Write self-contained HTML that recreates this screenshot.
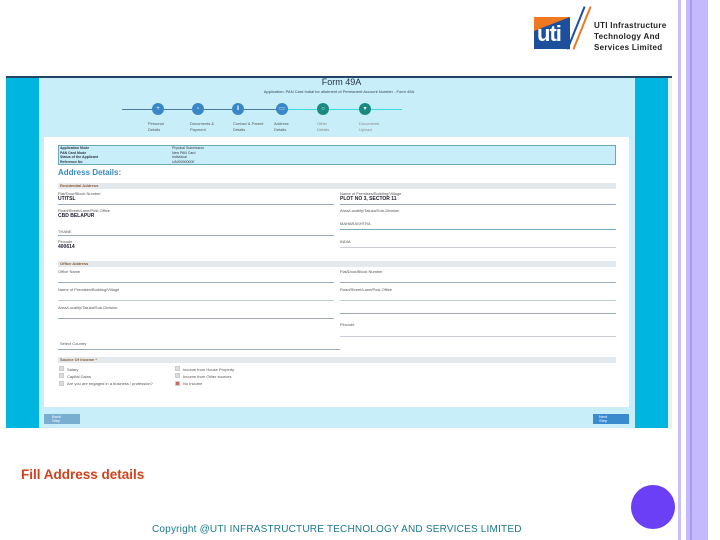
<!DOCTYPE html>
<html><head><style>
*{margin:0;padding:0;box-sizing:border-box}
body{width:720px;height:540px;background:#fff;position:relative;overflow:hidden;font-family:"Liberation Sans",sans-serif}
.a{position:absolute}
.t{position:absolute;font-size:4px;line-height:4px;color:#555;white-space:nowrap}
.v{position:absolute;font-size:5px;line-height:5px;font-weight:bold;color:#223;white-space:nowrap}
.ul{position:absolute;height:1px;background:#9ab}
.bar{position:absolute;left:58px;width:558px;height:6px;background:#e4e9ee}
.bar span{position:absolute;left:2px;top:1px;font-size:4px;line-height:4px;color:#8a5a2a;font-weight:bold}
.c{position:absolute;width:12px;height:12px;border-radius:50%;top:103px;color:#fff;font-size:6px;text-align:center;line-height:12px}
.cb{position:absolute;width:5px;height:5px;background:#ddd;border:1px solid #ccc}
</style></head><body>
<div class="a" style="left:678px;top:0;width:3px;height:540px;background:#c9c0fb"></div>
<div class="a" style="left:686px;top:0;width:22px;height:540px;background:#c4b8ff"></div>
<div class="a" style="left:690px;top:0;width:2px;height:540px;background:#a898ef"></div>
<div class="a" style="left:631px;top:485px;width:44px;height:44px;border-radius:50%;background:#6b3ff5"></div>
<div class="a" style="left:534px;top:17px;width:36px;height:32px;background:#1d4f9c"></div>
<div class="a" style="left:534px;top:17px;width:0;height:0;border-top:14px solid #f07820;border-right:36px solid transparent"></div>
<div class="a" style="left:537px;top:21px;font:bold 22px 'Liberation Sans';color:#fff;letter-spacing:-1px">uti</div>
<div class="a" style="left:575px;top:5px;width:2px;height:46px;background:#1d4f9c;transform:rotate(22deg)"></div>
<div class="a" style="left:581px;top:5px;width:2px;height:46px;background:#f07820;transform:rotate(22deg)"></div>
<div class="a" style="left:594px;top:20px;font:bold 8px 'Liberation Sans';color:#222;line-height:11px;letter-spacing:0.3px">UTI Infrastructure<br>Technology And<br>Services Limited</div>
<div class="a" style="left:6px;top:77px;width:666px;height:351px;background:#00b6e0"></div>
<div class="a" style="left:6px;top:76px;width:666px;height:2px;background:#246"></div>
<div class="a" style="left:668px;top:78px;width:4px;height:350px;background:#eee"></div>
<div class="a" style="left:39px;top:78px;width:596px;height:350px;background:#c8eefa"></div>
<div class="a" style="left:0;top:77px;width:678px;text-align:center;font-size:9px;color:#234;">&nbsp;&nbsp;Form 49A</div>
<div class="a" style="left:0;top:89px;width:678px;text-align:center;font-size:4px;color:#345">Application: PAN Card Indial for allotment of Permanent Account Number - Form 49A</div>
<div class="a" style="left:122px;top:109px;width:160px;height:1px;background:#4a7a99"></div>
<div class="a" style="left:282px;top:109px;width:120px;height:1px;background:#3dd"></div>
<div class="c" style="left:152px;background:#3a87c8">+</div>
<div class="c" style="left:192px;background:#3a87c8">▫</div>
<div class="c" style="left:232px;background:#3a87c8">‖</div>
<div class="c" style="left:276px;background:#3a87c8">▭</div>
<div class="c" style="left:317px;background:#1a8a80">○</div>
<div class="c" style="left:359px;background:#1a8a80">▾</div>
<div class="t" style="left:148px;top:121px;line-height:6px">Personal<br>Details</div>
<div class="t" style="left:190px;top:121px;line-height:6px">Documents &amp;<br>Payment</div>
<div class="t" style="left:233px;top:121px;line-height:6px">Contact &amp; Parent<br>Details</div>
<div class="t" style="left:274px;top:121px;line-height:6px">Address<br>Details</div>
<div class="t" style="left:317px;top:121px;line-height:6px;color:#888">Other<br>Details</div>
<div class="t" style="left:359px;top:121px;line-height:6px;color:#888">Documents<br>Upload</div>
<div class="a" style="left:44px;top:137px;width:585px;height:270px;background:#fff"></div>
<div class="a" style="left:58px;top:145px;width:558px;height:20px;background:#c8eefa;border:1px solid #6ab"></div>
<div class="t" style="left:60px;top:146px;line-height:4.5px;font-size:3.5px;font-weight:bold;color:#334">Application Mode<br>PAN Card Mode<br>Status of the Applicant<br>Reference No</div>
<div class="t" style="left:172px;top:146px;line-height:4.5px;font-size:3.5px;color:#334">Physical Submission<br>New PAN Card<br>Individual<br>UA000000000</div>
<div class="a" style="left:58px;top:168px;font-size:8px;font-weight:bold;color:#3a8abf">Address Details:</div>
<div class="bar" style="top:183px"><span>Residential Address</span></div>
<div class="t" style="left:58px;top:192px">Flat/Door/Block Number</div><div class="v" style="left:58px;top:197px">UTITSL</div><div class="ul" style="left:58px;top:204px;width:276px"></div>
<div class="t" style="left:340px;top:192px">Name of Premises/Building/Village</div><div class="v" style="left:340px;top:197px">PLOT NO 3, SECTOR 11</div><div class="ul" style="left:340px;top:204px;width:276px"></div>
<div class="t" style="left:58px;top:209px">Road/Street/Lane/Post Office</div><div class="v" style="left:58px;top:214px">CBD BELAPUR</div>
<div class="t" style="left:340px;top:209px">Area/Locality/Taluka/Sub-Division</div>
<div class="t" style="left:340px;top:222px">MAHARASHTRA</div><div class="ul" style="left:340px;top:229px;width:276px;background:#7ab"></div>
<div class="t" style="left:58px;top:230px">THANE</div><div class="ul" style="left:58px;top:235px;width:276px"></div>
<div class="t" style="left:340px;top:240px">INDIA</div><div class="ul" style="left:340px;top:247px;width:276px;background:#ccd"></div>
<div class="t" style="left:58px;top:240px">Pincode</div><div class="v" style="left:58px;top:245px">400614</div>
<div class="bar" style="top:261px"><span>Office Address</span></div>
<div class="t" style="left:58px;top:270px">Office Name</div><div class="ul" style="left:58px;top:282px;width:276px"></div>
<div class="t" style="left:340px;top:270px">Flat/Door/Block Number</div><div class="ul" style="left:340px;top:282px;width:276px"></div>
<div class="t" style="left:58px;top:288px">Name of Premises/Building/Village</div><div class="ul" style="left:58px;top:300px;width:276px;background:#bcc"></div>
<div class="t" style="left:340px;top:288px">Road/Street/Lane/Post Office</div><div class="ul" style="left:340px;top:300px;width:276px;background:#bcc"></div>
<div class="t" style="left:58px;top:306px">Area/Locality/Taluka/Sub-Division</div><div class="ul" style="left:58px;top:318px;width:276px"></div>
<div class="ul" style="left:340px;top:313px;width:276px"></div>
<div class="ul" style="left:340px;top:336px;width:276px;background:#ccd"></div>
<div class="t" style="left:340px;top:323px">Pincode</div>
<div class="t" style="left:60px;top:342px">Select Country</div><div class="ul" style="left:58px;top:349px;width:282px"></div>
<div class="bar" style="top:357px"><span>Source Of Income *</span></div>
<div class="cb" style="left:59px;top:366px"></div><div class="t" style="left:67px;top:368px">Salary</div>
<div class="cb" style="left:59px;top:373px"></div><div class="t" style="left:67px;top:375px">Capital Gains</div>
<div class="cb" style="left:59px;top:381px"></div><div class="t" style="left:67px;top:382px">Are you are engaged in a business / profession?</div>
<div class="cb" style="left:175px;top:366px"></div><div class="t" style="left:183px;top:368px">Income from House Property</div>
<div class="cb" style="left:175px;top:373px"></div><div class="t" style="left:183px;top:375px">Income from Other sources</div>
<div class="cb" style="left:175px;top:381px;background:#c66"></div><div class="t" style="left:183px;top:382px">No Income</div>
<div class="a" style="left:44px;top:414px;width:36px;height:10px;background:#7aaed0;color:#fff;font-size:4px;padding:1px 8px;line-height:4px">Back<br>Step</div>
<div class="a" style="left:593px;top:414px;width:36px;height:10px;background:#3a8ad0;color:#fff;font-size:4px;padding:1px 6px;line-height:4px">Next<br>Step</div>
<div class="a" style="left:21px;top:467px;font-size:13.5px;font-weight:bold;color:#d4401a">Fill Address details</div>
<div class="a" style="left:152px;top:524px;font-size:10px;color:#1a7a8a;letter-spacing:0.2px">Copyright @UTI INFRASTRUCTURE TECHNOLOGY AND SERVICES LIMITED</div>
</body></html>
